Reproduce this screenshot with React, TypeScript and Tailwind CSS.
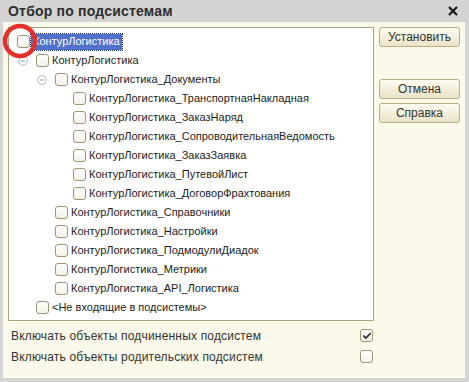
import { Check } from "lucide-react"

type Node = { label: string; level: number; expander?: boolean; selected?: boolean }

const nodes: Node[] = [
  { label: "КонтурЛогистика", level: 0, selected: true },
  { label: "КонтурЛогистика", level: 1, expander: true },
  { label: "КонтурЛогистика_Документы", level: 2, expander: true },
  { label: "КонтурЛогистика_ТранспортнаяНакладная", level: 3 },
  { label: "КонтурЛогистика_ЗаказНаряд", level: 3 },
  { label: "КонтурЛогистика_СопроводительнаяВедомость", level: 3 },
  { label: "КонтурЛогистика_ЗаказЗаявка", level: 3 },
  { label: "КонтурЛогистика_ПутевойЛист", level: 3 },
  { label: "КонтурЛогистика_ДоговорФрахтования", level: 3 },
  { label: "КонтурЛогистика_Справочники", level: 2 },
  { label: "КонтурЛогистика_Настройки", level: 2 },
  { label: "КонтурЛогистика_ПодмодулиДиадок", level: 2 },
  { label: "КонтурЛогистика_Метрики", level: 2 },
  { label: "КонтурЛогистика_API_Логистика", level: 2 },
  { label: "<Не входящие в подсистемы>", level: 1 },
]

const indent: Record<number, string> = {
  0: "pl-[8px]",
  1: "pl-[9px]",
  2: "pl-[28px]",
  3: "pl-[46px]",
}

function Box({ checked = false }: { checked?: boolean }) {
  return (
    <div className="w-[13px] h-[13px] shrink-0 rounded-[3px] border border-[#9d9577] bg-gradient-to-b from-white to-[#f4f1e6] flex items-center justify-center">
      {checked && <Check className="w-[10px] h-[10px] text-[#2b2b2b]" strokeWidth={4} />}
    </div>
  )
}

function Expander() {
  return (
    <svg width="10" height="10" viewBox="0 0 10 10" className="mr-[8px]">
      <circle cx="5" cy="5" r="4.3" fill="white" stroke="#b3b3b3" strokeWidth="1" />
      <line x1="2.8" y1="5" x2="7.2" y2="5" stroke="#9a9a9a" strokeWidth="1" />
    </svg>
  )
}

function Button({ children }: { children: React.ReactNode }) {
  return (
    <div className="w-[81px] h-[20px] rounded-[3px] border border-[#b9ae86] bg-gradient-to-b from-[#fffdf3] to-[#ebe3c6] flex items-center justify-center text-[12px] text-[#333]">
      {children}
    </div>
  )
}

export default function App() {
  return (
    <div className="w-[469px] h-[382px] bg-[#d4d4d4] flex flex-col relative font-['Liberation_Sans',Arial,sans-serif]">
      {/* Title bar */}
      <div className="h-[22px] flex items-center justify-between pl-[8px] pr-[11px]">
        <span className="text-[14px] font-bold text-[#2e2e2e] tracking-[0.2px]">Отбор по подсистемам</span>
        <svg width="10" height="10" viewBox="0 0 10 10">
          <path d="M1 1 L9 9 M9 1 L1 9" stroke="#1a1a1a" strokeWidth="2.2" />
        </svg>
      </div>

      {/* Body */}
      <div className="flex-1 ml-[3px] mr-[4px] mb-[4px] bg-[#fbf9ea] flex flex-col pl-[5px] pt-[5px]">
        <div className="flex">
          {/* Tree */}
          <div className="w-[366px] h-[294px] border border-[#aaa27f] bg-white pt-[4px] text-[11px] text-[#1c1c1c]">
            {nodes.map((n, i) => (
              <div key={i} className={`h-[19px] flex items-center ${indent[n.level]}`}>
                {n.level > 0 && (
                  <div className="w-[18px] flex justify-end">{n.expander && <Expander />}</div>
                )}
                <Box />
                {n.selected ? (
                  <span className="ml-[1px] px-[2px] h-[16px] flex items-center bg-[#4f70cc] text-white outline outline-1 outline-dotted outline-[#1d2f66]">
                    {n.label}
                  </span>
                ) : (
                  <span className="ml-[3px] whitespace-nowrap">{n.label}</span>
                )}
              </div>
            ))}
          </div>

          {/* Buttons */}
          <div className="ml-[5px] flex flex-col">
            <Button>Установить</Button>
            <div className="h-[32px]" />
            <Button>Отмена</Button>
            <div className="h-[4px]" />
            <Button>Справка</Button>
          </div>
        </div>

        {/* Options */}
        <div className="w-[366px] mt-[8px] flex flex-col gap-[8px] text-[12px] text-[#333] tracking-[0.18px]">
          <div className="h-[13px] flex items-center justify-between pl-[3px] pr-[1px]">
            <span>Включать объекты подчиненных подсистем</span>
            <Box checked />
          </div>
          <div className="h-[13px] flex items-center justify-between pl-[3px] pr-[1px]">
            <span>Включать объекты родительских подсистем</span>
            <Box />
          </div>
        </div>
      </div>

      {/* Red annotation circle */}
      <svg className="absolute left-[2px] top-[23px] pointer-events-none" width="38" height="38" viewBox="0 0 38 38">
        <circle cx="18" cy="18" r="15" fill="none" stroke="#e5312b" strokeWidth="4.5" />
      </svg>
    </div>
  )
}
